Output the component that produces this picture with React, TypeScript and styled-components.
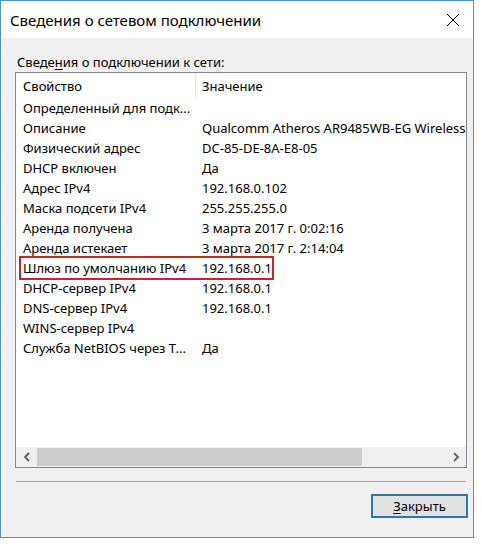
import React from "react";
import styled, { createGlobalStyle } from "styled-components";

const GlobalStyle = createGlobalStyle`
  html, body { margin: 0; padding: 0; background: #ffffff; }
  body { font-family: "Noto Sans", "Open Sans", sans-serif; color: #000; }
  * { box-sizing: border-box; }
`;

const Window = styled.div`
  width: 474px;
  height: 538px;
  border: 1px solid #4a93c8;
  display: flex;
  flex-direction: column;
  background: #f0f0f0;
`;

const TitleBar = styled.div`
  height: 37px;
  flex: none;
  background: #ffffff;
  display: flex;
  align-items: center;
  justify-content: space-between;
  padding: 0 10px 0 9px;
`;

const Title = styled.div`
  font-size: 15px;
  color: #000;
`;

const CloseIcon = styled.svg`
  width: 14px;
  height: 14px;
  margin-right: 3px;
  display: block;
`;

const Body = styled.div`
  flex: 1;
  display: flex;
  flex-direction: column;
  padding: 16px 6px 0 14px;
`;

const GroupLabel = styled.div`
  font-size: 13px;
  line-height: 16px;
  height: 16px;
  padding-left: 2px;
  margin-bottom: 2px;
`;

const Mnemonic = styled.span`
  text-decoration: underline;
  text-underline-offset: 2px;
`;

const ListBox = styled.div`
  position: relative;
  width: 452px;
  height: 396px;
  border: 1px solid #828790;
  background: #ffffff;
  display: flex;
  flex-direction: column;
  overflow: hidden;
`;

const HeaderRow = styled.div`
  height: 25px;
  flex: none;
  display: flex;
  align-items: stretch;
`;

const HeaderCell = styled.div<{ $w?: number }>`
  width: ${(p) => (p.$w ? `${p.$w}px` : "auto")};
  flex: ${(p) => (p.$w ? "none" : "1")};
  display: flex;
  align-items: center;
  padding-left: ${(p) => (p.$w ? "7px" : "6px")};
  font-size: 13px;
  border-right: ${(p) => (p.$w ? "1px solid #e5e5e5" : "none")};
  white-space: nowrap;
`;

const Rows = styled.div`
  flex: 1;
  display: flex;
  flex-direction: column;
`;

const Row = styled.div`
  height: 20px;
  display: flex;
  align-items: center;
  font-size: 13px;
  white-space: nowrap;
`;

const Cell = styled.div<{ $w?: number }>`
  width: ${(p) => (p.$w ? `${p.$w}px` : "auto")};
  flex: ${(p) => (p.$w ? "none" : "1")};
  padding-left: ${(p) => (p.$w ? "7px" : "6px")};
  overflow: hidden;
  white-space: nowrap;
`;

const Highlight = styled.div`
  position: absolute;
  left: 3px;
  top: 183px;
  width: 255px;
  height: 24px;
  border: 2px solid #c4262e;
  pointer-events: none;
`;

const HScroll = styled.div`
  height: 20px;
  flex: none;
  background: #f0f0f0;
  display: flex;
  align-items: stretch;
`;

const ArrowBtn = styled.div`
  width: 21px;
  flex: none;
  display: flex;
  align-items: center;
  justify-content: center;
`;

const Track = styled.div`
  flex: 1;
  display: flex;
  align-items: stretch;
  padding: 1px 0;
`;

const Thumb = styled.div`
  background: #cdcdcd;
`;

const Separator = styled.div`
  height: 1px;
  width: 450px;
  margin-left: 1px;
  margin-top: 13px;
  background: #a0a0a0;
`;

const Footer = styled.div`
  display: flex;
  justify-content: flex-end;
  padding-top: 12px;
`;

const Button = styled.button`
  width: 97px;
  height: 24px;
  margin-right: -1px;
  border: 2px solid #2c78ad;
  background: #e1e1e1;
  font-family: "Noto Sans", "Open Sans", sans-serif;
  font-size: 13px;
  color: #000;
  padding: 0;
  display: flex;
  align-items: center;
  justify-content: center;
`;

const rows: [string, string][] = [
  ["Определенный для подк...", ""],
  ["Описание", "Qualcomm Atheros AR9485WB-EG Wireless Network Adapter"],
  ["Физический адрес", "DC-85-DE-8A-E8-05"],
  ["DHCP включен", "Да"],
  ["Адрес IPv4", "192.168.0.102"],
  ["Маска подсети IPv4", "255.255.255.0"],
  ["Аренда получена", "3 марта 2017 г. 0:02:16"],
  ["Аренда истекает", "3 марта 2017 г. 2:14:04"],
  ["Шлюз по умолчанию IPv4", "192.168.0.1"],
  ["DHCP-сервер IPv4", "192.168.0.1"],
  ["DNS-сервер IPv4", "192.168.0.1"],
  ["WINS-сервер IPv4", ""],
  ["Служба NetBIOS через Т...", "Да"],
];

const COL = 180;

export default function App() {
  return (
    <>
      <GlobalStyle />
      <Window>
        <TitleBar>
          <Title>Сведения о сетевом подключении</Title>
          <CloseIcon viewBox="0 0 14 14">
            <path d="M1 1 L13 13 M13 1 L1 13" stroke="#000" strokeWidth="1" fill="none" />
          </CloseIcon>
        </TitleBar>
        <Body>
          <GroupLabel>
            Сведе<Mnemonic>н</Mnemonic>ия о подключении к сети:
          </GroupLabel>
          <ListBox>
            <HeaderRow>
              <HeaderCell $w={COL}>Свойство</HeaderCell>
              <HeaderCell>Значение</HeaderCell>
            </HeaderRow>
            <Rows>
              {rows.map(([k, v]) => (
                <Row key={k}>
                  <Cell $w={COL}>{k}</Cell>
                  <Cell>{v}</Cell>
                </Row>
              ))}
            </Rows>
            <HScroll>
              <ArrowBtn>
                <svg width="8" height="10" viewBox="0 0 8 10">
                  <path d="M6 1 L2 5 L6 9" stroke="#606060" strokeWidth="1.8" fill="none" />
                </svg>
              </ArrowBtn>
              <Track>
                <Thumb style={{ width: "325px" }} />
              </Track>
              <ArrowBtn>
                <svg width="8" height="10" viewBox="0 0 8 10">
                  <path d="M2 1 L6 5 L2 9" stroke="#606060" strokeWidth="1.8" fill="none" />
                </svg>
              </ArrowBtn>
            </HScroll>
            <Highlight />
          </ListBox>
          <Separator />
          <Footer>
            <Button>
              <Mnemonic>З</Mnemonic>акрыть
            </Button>
          </Footer>
        </Body>
      </Window>
    </>
  );
}
